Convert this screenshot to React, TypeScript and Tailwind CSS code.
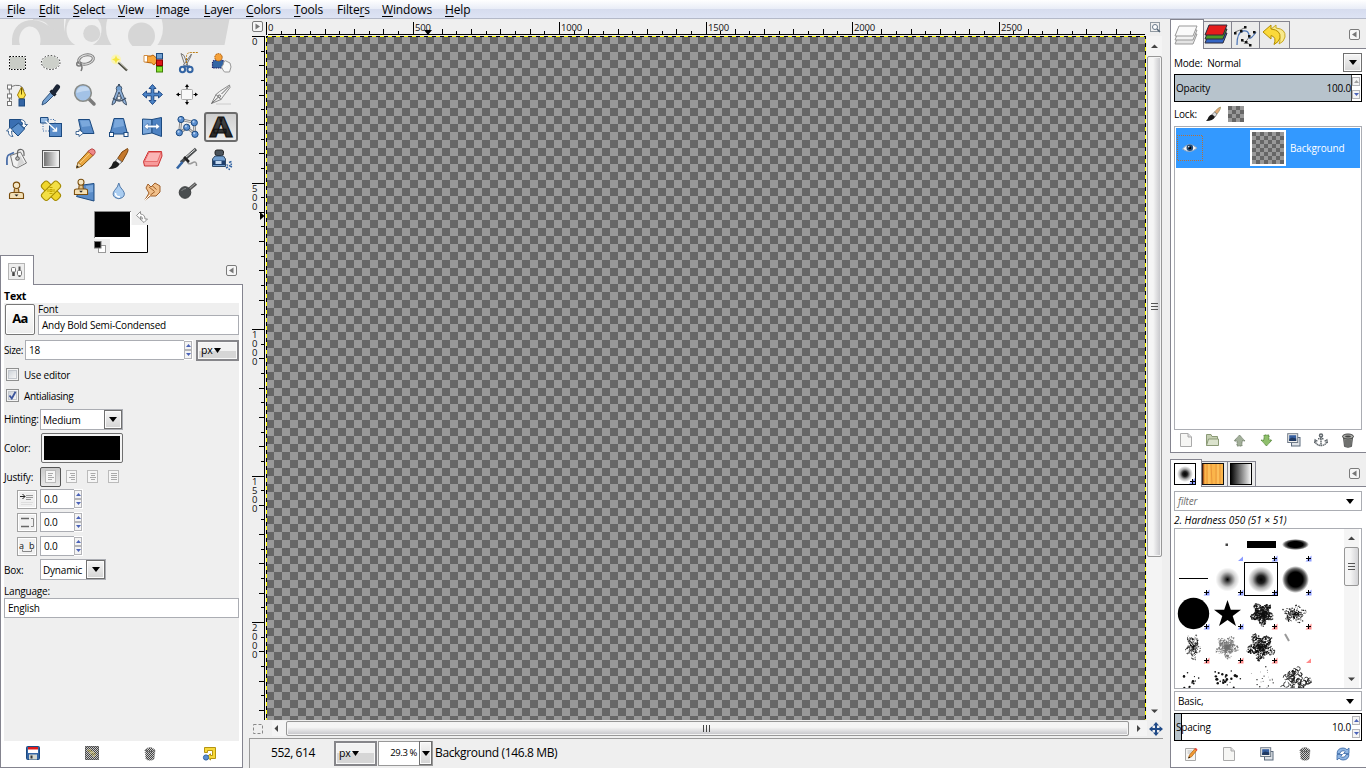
import React from "react";

type Kids = { children?: React.ReactNode };
type TextProps = Kids & { className?: string };

const B = "#3465a4";
const BL = "#729fcf";
const BD = "#1c4a80";

/* ---------- small building blocks ---------- */

function Label({ children, className = "" }: TextProps) {
  return <span className={"whitespace-nowrap text-[10px] leading-[12px] tracking-[-0.2px] text-black " + className}>{children}</span>;
}

function DownTri({ w = 8, h = 5, fill = "#000" }: { w?: number; h?: number; fill?: string }) {
  return (
    <svg width={w} height={h} viewBox="0 0 8 5" preserveAspectRatio="none" className="shrink-0">
      <path d="M0 0H8L4 5Z" fill={fill} />
    </svg>
  );
}

function Stepper({ dim = false }: { dim?: boolean }) {
  return (
    <div className="flex h-full w-[9px] shrink-0 flex-col justify-between bg-white py-px">
      <div className="flex h-[9px] w-[8px] items-center justify-center border border-[#b4b4b8] bg-[#f4f4f4]">
        <svg width="5" height="3" viewBox="0 0 5 3"><path d="M0 3L2.500 0L5 3Z" fill={dim ? "#a0a0a0" : "#4a62b8"} /></svg>
      </div>
      <div className="flex h-[9px] w-[8px] items-center justify-center border border-[#b4b4b8] bg-[#f4f4f4]">
        <svg width="5" height="3" viewBox="0 0 5 3"><path d="M0 0L2.500 3L5 0Z" fill="#4a62b8" /></svg>
      </div>
    </div>
  );
}

function Entry({ children, className = "" }: TextProps) {
  return <div className={"flex shrink-0 items-center border border-[#abadb3] bg-white pl-[3px] " + className}>{children}</div>;
}

function DropButton({ className = "" }: { className?: string }) {
  return (
    <div className={"flex shrink-0 items-center justify-center border border-[#707070] bg-linear-to-b from-[#f6f6f6] to-[#d4d4d4] shadow-[inset_0_0_0_1px_#fbfbfb] " + className}>
      <DownTri />
    </div>
  );
}

function UnitButton({ className = "" }: { className?: string }) {
  return (
    <div className={"flex shrink-0 items-center border-2 border-[#86868a] bg-linear-to-b from-[#f2f2f2] from-50% to-[#d6d6d6] to-50% pl-[3px] shadow-[inset_0_0_0_1px_#f8f8f8] " + className}>
      <Label className="!text-[10.5px]">px</Label>
      <span className="ml-px flex"><DownTri w={7} /></span>
    </div>
  );
}

function CornerArrow({ right = false }: { right?: boolean }) {
  return (
    <svg width="11" height="11" viewBox="0 0 11 11" className="shrink-0">
      <rect x=".5" y=".5" width="10" height="10" rx="1.500" fill="#f6f6f6" stroke="#7b7b7b" />
      <path d={right ? "M3.500 2.500L8 5.500L3.500 8.500Z" : "M7.500 2.500L3 5.500L7.500 8.500Z"} fill="#777" />
    </svg>
  );
}

/* ---------- toolbox icons, each on a 34 x 32 cell ---------- */

const HandlePair = ({ pts }: { pts: number[][] }) => (
  <g>{pts.map(([x, y], i) => <rect key={i} x={x} y={y} width="4" height="4" fill="#fff" stroke={BD} />)}</g>
);

const Stamp = () => (
  <g stroke="#7a4d0c" strokeWidth="1.100">
    <path d="M14.500 13.500L14 18H19L18.500 13.500" fill="#e3c48b" />
    <circle cx="16.500" cy="10.300" r="3.200" fill="#f5e6c4" />
    <path d="M9.500 19.500Q9.500 17.500 12 17.500H21Q23.500 17.500 23.500 19.500V23.500H9.500Z" fill="#f3dfb4" />
    <path d="M14.500 19.500H18.500L16.500 21.500Z" fill="#222" stroke="none" />
  </g>
);

const tools: React.ReactNode[] = [
  <g><rect x="9.500" y="9.500" width="16" height="13" fill="#c9ccc6" stroke="#fff" /><rect x="9.500" y="9.500" width="16" height="13" fill="none" stroke="#000" strokeDasharray="1.500 1.500" /></g>,
  <g><ellipse cx="16.700" cy="15.500" rx="9.300" ry="7" fill="#cdd0ca" stroke="#fff" strokeWidth="1.200" /><ellipse cx="16.700" cy="15.500" rx="9.300" ry="7" fill="none" stroke="#222" strokeDasharray="1.500 1.700" /></g>,
  <g fill="none"><ellipse cx="18" cy="12.500" rx="7.500" ry="4.500" stroke="#777" strokeWidth="3" transform="rotate(-14 18 12.500)" /><ellipse cx="18" cy="12.500" rx="7.500" ry="4.500" stroke="#ddd" strokeWidth="1.200" transform="rotate(-14 18 12.500)" /><path d="M11 15C8 15 8 19 11 19S14 16 11.500 15.500M13 18Q15 20 13 24" stroke="#777" strokeWidth="1.500" /></g>,
  <g><circle cx="14" cy="12.500" r="5" fill="#fdf6a0" opacity=".7" /><path d="M14 8.500L15.200 11.300L18 12.500L15.200 13.700L14 16.500L12.800 13.700L10 12.500L12.800 11.300Z" fill="#f5e63c" /><path d="M16.500 15.500L25 23.500" stroke="#4a4a40" strokeWidth="2.400" /><path d="M17 15L25.200 22.500" stroke="#c9c9b8" strokeWidth="1" /></g>,
  <g><path d="M8.500 9H15L17 8L20.500 11V15L18 18L15.500 16L12 15.500L8.500 14.500Z" fill="#f9a63a" stroke="#b35f0a" /><path d="M8 8.500H11.500V15H8Z" fill="#fff" stroke="#c87920" strokeWidth=".8" /><rect x="20.500" y="6.500" width="6" height="5.500" fill={BL} stroke={BD} /><rect x="20.500" y="13" width="6" height="5.500" fill="#dd1818" stroke="#8a0000" /><rect x="20.500" y="19.500" width="6" height="5.500" fill="#8ae234" stroke="#3d8005" /></g>,
  <g fill="none"><path d="M11 6.500L14 8.500L18 19L15.500 20Z" fill="#eee" stroke="#777" /><path d="M21.500 7L20.500 10L15.500 19.500L13.500 18Z" fill="#ddd" stroke="#777" /><ellipse cx="12.500" cy="22.500" rx="2.600" ry="2.800" stroke={B} strokeWidth="2" /><ellipse cx="20" cy="22.500" rx="2.600" ry="2.800" stroke={B} strokeWidth="2" /><path d="M13 19.500H20" stroke={B} strokeWidth="2" /><path d="M16.500 16V9.500Q16.500 5.500 21 5.500H28" stroke="#bb7c10" strokeDasharray="2 1" /></g>,
  <g><path d="M8.500 21V15.500Q9 13 13 13H16Q20.500 13 20.500 17V21Z" fill={B} stroke="#1b1c66" strokeDasharray="1.500 .8" strokeWidth="1.200" /><circle cx="14.500" cy="10.300" r="3.700" fill="#f5a13a" stroke="#a8580a" strokeDasharray="1.500 .8" /><path d="M19 23L17.500 20L19 18L20 14.500Q21.500 13 23 14.500L26 16L27 20L25.500 25H20.500Z" fill="#f8f8f8" stroke="#999" /></g>,

  <g fill="none"><path d="M9.500 8V24M10 8Q22 3 24 12" stroke="#777" /><path d="M8.500 9L11.500 21" stroke="#999" /><rect x="7.500" y="6" width="4" height="4" fill="#fff" stroke="#777" /><rect x="7.500" y="15" width="4" height="4" fill="#fff" stroke="#777" /><rect x="7.500" y="22.500" width="4" height="4" fill="#fff" stroke="#777" /><path d="M21.500 8L25.500 16L23.500 19.500H19.500L17.500 16Z" fill="#fbe24a" stroke="#a17d00" /><path d="M21.500 9V15.500" stroke="#6b5600" /><rect x="19" y="20" width="5.500" height="7" fill={B} stroke={BD} /></g>,
  <g><path d="M17.500 12.500L20.500 15.500L12 24L8 26L9 22Z" fill={BL} stroke="#31537c" /><path d="M16.500 11.500L21.500 16.500" stroke="#151b25" strokeWidth="3" /><path d="M19.500 13.500L23.500 8" stroke="#1c2636" strokeWidth="5" strokeLinecap="round" /></g>,
  <g><path d="M20.500 19.500L26 25" stroke="#7b7b7b" strokeWidth="3.500" strokeLinecap="round" /><circle cx="15" cy="14" r="8.300" fill="#a3c2e6" stroke="#8a8d8a" strokeWidth="1.600" /><path d="M8.500 14Q8.500 7.500 15 7.500T21.500 11.500Q15 11.500 8.500 14Z" fill="#c3d8f0" /></g>,
  <g fill="none" stroke="#45566b"><circle cx="17" cy="9.500" r="2.800" fill={BL} /><path d="M17 5V7" strokeWidth="2" /><path d="M15 11L10.500 23L10 26L13 24L17 13L21.500 24L24.500 26L24 23L19 11" fill="#8fb1da" /><path d="M11 19Q17 25 24 19" strokeWidth="1.300" /><circle cx="17" cy="19" r="2" fill="#eee" /></g>,
  <path d="M16.500 5.500L20 9.500H17.800V14.200H22.500V12L26.500 15.500L22.500 19V16.800H17.800V21.500H20L16.500 25.500L13 21.500H15.200V16.800H10.500V19L6.500 15.500L10.500 12V14.200H15.200V9.500H13Z" fill="#4b84c8" stroke="#204a87" />,
  <g><rect x="11.500" y="10.500" width="11" height="10" rx="1" fill="#f7f7f7" stroke="#aaa" /><g fill="#000"><path d="M15 8L17 5L19 8ZM16.500 8H17.500V10H16.500ZM15 23L17 26L19 23ZM16.500 21H17.500V23H16.500ZM9 13.500L6 15.500L9 17.500ZM9 15H10.500V16H9ZM25 13.500L28 15.500L25 17.500ZM23.500 15H25V16H23.500Z" /></g></g>,
  <g><path d="M7.500 24.500L12 15.500L15.500 12.500L25.500 6L26 8.500L19.500 17L17 20.500Z" fill="#f0f0f0" stroke="#8a8a8a" /><path d="M7.500 24.500L14.500 18M12 15.500L17 20.500M17.500 15L25 7.500" stroke="#666" fill="none" /><circle cx="15.300" cy="17.200" r="1.200" fill="#fff" stroke="#666" /><path d="M12 25H27" stroke="#ccc" /></g>,

  <g stroke={BD}><path d="M9.500 8.500H21L24.500 17.500H9.500Z" fill="#3a6fb2" /><path d="M18.500 12L24.500 18L18 25L11 18Z" fill="#5c91cd" /><path d="M6.500 20L10 16.500L13.500 20H11.500Q11.500 24 13 25.500Q8 25.500 8.500 20ZM20.500 8.500Q26 9 25 13.500H27.500L24 17L21 13.500H22.500Q23 11 20.500 10.500Z" fill="#fff" strokeWidth=".8" /></g>,
  <g><rect x="15.500" y="12.500" width="12" height="13" fill="#5a8cc8" stroke={BD} /><path d="M6.500 6.500H14V12H6.500Z" fill="#94b9e2" stroke={BD} /><path d="M14 8.500H21V13M9 12.500V20H15" fill="none" stroke={B} strokeDasharray="1 1.500" /><path d="M11.500 10L22 19.500M22.500 16.500V20H18.500" fill="none" stroke="#fff" strokeWidth="1.300" /></g>,
  <g><path d="M10.500 8.500H21.500L26 22.500H13.500Z" fill="#5a8cc8" stroke={BD} /><path d="M12 9.500H21L22.500 15L14 16Z" fill="#7ba8dc" /><path d="M8 20.500H11V18.500L15.500 22L11 25.500V23.500H8Z" fill="#fff" stroke={BD} strokeWidth=".8" /></g>,
  <g><path d="M12 7.500H21.500L25.500 23H8Z" fill="#5a8cc8" stroke={BD} /><path d="M12.800 8.500H21L22 15L11.500 17Z" fill="#7ba8dc" /><HandlePair pts={[[7.5, 21.5], [22, 21.5]]} /></g>,
  <g><path d="M6.500 8L16 8.500V22L6.500 23.500Z" fill="#7ba8dc" stroke={BD} /><path d="M16 8.500L25.500 6.500V25.500L16 22Z" fill="#4d82c2" stroke={BD} /><path d="M8 15.500L12 12V14.200H20V12L24 15.500L20 19V16.800H12V19Z" fill="#fff" stroke={B} strokeWidth=".6" /></g>,
  <g><path d="M11 8.500L24 11.500L25 23L17 16.500L9.500 22Z" fill="none" stroke="#888" strokeWidth="2.800" /><path d="M11 8.500L24 11.500L25 23L17 16.500L9.500 22Z" fill="none" stroke="#ddd" />{[[11, 8.5], [24.3, 11.7], [16.7, 16.3], [9.3, 21.7], [25, 23.3]].map(([x, y], i) => <g key={i}><circle cx={x} cy={y} r="3.100" fill="#5b8fd0" stroke={BD} /><circle cx={x - 0.8} cy={y - 1} r="1.100" fill="#b8d3f2" /></g>)}</g>,
  <text transform="translate(17 25.500) scale(1.220 1)" textAnchor="middle" fontSize="27" fontWeight="900" fontFamily="Roboto, sans-serif" fill="url(#letter)" stroke="#111" strokeWidth="1">A</text>,

  <g><path d="M8.500 12Q6.500 13 7 22M8.500 12L14 9.500" fill="none" stroke="#4a6ea8" strokeWidth="1.800" /><path d="M10.500 12.500L20.500 9L26.500 20L17 25L13 23Z" fill="#f2f2f2" stroke="#777" /><path d="M20 12L24.500 20L17 24Z" fill="#d5d5d5" /><path d="M17.500 16V9Q18 6 21.500 6.500Q24.500 7 24 13" fill="none" stroke="#666" strokeWidth="1.200" /><circle cx="17.500" cy="15.500" r="1.800" fill="#bbb" stroke="#555" /></g>,
  <g><rect x="8.500" y="7.500" width="17" height="17" fill="url(#toolgrad)" stroke="#555" /><rect x="9.500" y="8.500" width="15" height="15" fill="none" stroke="#eee" /></g>,
  <g><path d="M21 7.500L26 11.500L14 23L8.500 25L10 19.500Z" fill="#e9a640" stroke="#86550b" /><path d="M10 19.500L14 23L8.500 25Z" fill="#f3dfb4" stroke="#86550b" strokeWidth=".6" /><path d="M12 20L22 10" stroke="#f8cf80" /><path d="M21.500 7Q24 4.500 26.500 7Q28 9.500 26.500 11L25 12.500L20 8.500Z" fill="#e88" stroke="#a33" strokeWidth=".8" /><path d="M8.500 25L9 22.500L11 24Z" fill="#222" /></g>,
  <g><path d="M25.500 5.500Q27 7 24 12L20 19L15.500 15.500L20 9Z" fill="#c4782c" stroke="#7a4209" /><path d="M15.500 15.500L20 19L17.500 21L13.500 18Z" fill="#eee" stroke="#777" /><path d="M13.500 18L17.500 21Q16 26 6.500 26Q10 23.500 10.500 20.500Q11 18 13.500 18Z" fill="#1c1e1e" /></g>,
  <g><path d="M12.500 8.500H25.500L26 13L22 23H8.500L7.500 18.500Z" fill="#f79a9a" stroke="#cc3333" /><path d="M13 9.300H25L21.500 18.500H8.500Z" fill="#fbb5b5" stroke="#e05555" strokeWidth=".7" /></g>,
  <g><path d="M16.500 14.500Q17 23 22 20T26.500 23" fill="none" stroke="#999" strokeWidth="1.500" /><path d="M11 19.500L26 6" stroke="#4a4d4f" strokeWidth="3.200" /><path d="M15 15L25 6.500" stroke="#e8e8e8" strokeWidth="1" /><path d="M14 14L19 19" stroke="#222" strokeWidth="2.500" /><path d="M12.500 19L7 25.500" stroke={B} strokeWidth="2.600" /></g>,
  <g><rect x="11" y="7" width="8.500" height="5.500" rx="2" fill="#4b545c" stroke="#222" /><path d="M11 13H19.500L21.500 16V23.500H8.500V16Z" fill={BL} stroke="#314a66" /><rect x="9" y="17.500" width="12" height="4.500" fill="#1d3f6d" /><rect x="11.500" y="18" width="6" height="3" fill="#c7dbf1" /><path d="M22.500 21.500L24 22.500M25 19.500L27.500 18.500M22 25L24 24M25 22.500L28 24M26.500 21L28 21.500M24.500 26L26 26.500" stroke={B} strokeWidth="1.400" /></g>,

  <Stamp />,
  <g stroke="#a48a00"><rect x="6" y="11.500" width="22" height="8.500" rx="3" fill="#f0d62c" transform="rotate(45 17 15.700)" /><rect x="6" y="11.500" width="22" height="8.500" rx="3" fill="#f3df45" transform="rotate(-45 17 15.700)" /><path d="M17 12V19M13.500 15.500H20.500" stroke="#c4a600" strokeDasharray="1 1" strokeWidth="3" /></g>,
  <g><path d="M15 10L26 8.500V26L8.500 21.500Z" fill="#5a8cc8" stroke={BD} /><path d="M18 11L25 10V17L18 18Z" fill="#7ba8dc" /><g transform="translate(-2.500 -2.500) scale(.94)"><Stamp /></g></g>,
  <g><path d="M16.800 8Q17.500 12 21 15.500Q24 19.500 20.500 22.500Q17 25 13 22.500Q9.500 19.500 12.500 15.500Q16 12 16.800 8Z" fill="#a9ccf0" stroke="#5078a8" /><path d="M13.500 18Q13.500 22 18 22" stroke="#fff" fill="none" strokeWidth="1.500" /></g>,
  <g><path d="M9 25L13 18L10 13L12 9L15 12L19 8L24 11V17L20 21H14.500Z" fill="#f1c08b" stroke="#a0602a" /><path d="M13 12L18 16M16 10.500L20.500 14.500M14.500 20L19 16.500" stroke="#a0602a" /><path d="M9 25L14 20" stroke="#fff" strokeWidth="1" /></g>,
  <g><path d="M17 16L26 8.500" stroke="#555" strokeWidth="3.500" /><path d="M18 15L25.500 8.500" stroke="#bbb" strokeWidth=".8" /><circle cx="15" cy="17.500" r="5.800" fill="#4a4e50" stroke="#3a3d3e" /><path d="M11.500 16Q13 13.500 16 13.500" stroke="#8a8d8e" fill="none" /></g>,
];

function Toolbox() {
  return (
    <div className="grid w-[238px] grid-cols-7 pt-px">
      {tools.map((t, i) => (
        <div key={i} className="flex h-8 w-[34px] items-center justify-center">
          <div className={i === 20 ? "flex h-[30px] w-[34px] items-center justify-center rounded-[3px] border-2 border-[#6c6c6c] bg-linear-to-b from-[#cfcfcf] to-[#ebebeb]" : "flex"}>
            <svg width="34" height="32" viewBox="0 0 34 32" className="shrink-0">{t}</svg>
          </div>
        </div>
      ))}
    </div>
  );
}

function WilberBanner() {
  return (
    <svg width="243" height="27" viewBox="0 0 243 27" className="block shrink-0">
      <path d="M12 26V20C13 8 21 1 33 1C45 1 52 12 64 13L66 0H229.500L224.500 26H12Z" fill="#d6d6d6" />
      <path d="M20 26C17 18 22 7.500 30 7.500C38 7.500 42 17 40 26Z" fill="#efefef" />
      <path d="M33 0H64V13H60Q50 10 46 4Q42 1 33 1Z" fill="#d6d6d6" />
      <circle cx="84" cy="11" r="17.500" fill="#efefef" />
      <circle cx="91.700" cy="14.500" r="8.500" fill="#d6d6d6" />
      <circle cx="134.500" cy="9" r="28.500" fill="#efefef" />
      <circle cx="141.500" cy="17" r="13.500" fill="#d6d6d6" />
    </svg>
  );
}

function ColorArea() {
  return (
    <div className="flex h-[48px] pl-[94px] pt-[3px]">
      <svg width="56" height="45" viewBox="0 0 56 45">
        <path d="M16 15H54V43H16Z" fill="#fff" />
        <path d="M16 42.500H53.500V15" fill="none" stroke="#000" />
        <path d="M.5 28V1.500H37" fill="none" stroke="#888" />
        <rect x="1" y="2" width="36.500" height="27" fill="#fff" />
        <rect x="1" y="2" width="35" height="25" fill="#000" />
        <rect x="4.500" y="35.500" width="7" height="7" fill="#fff" stroke="#999" />
        <rect x=".5" y="31.500" width="6.500" height="6.500" fill="#000" stroke="#777" />
        <path d="M42.500 5.500L46.500 1.500V4Q51 4.500 51 9H53.500L50 12.500L46 9H48.500Q48.500 6.500 46.500 6.500V9Z" fill="#fff" stroke="#888" strokeWidth=".9" />
      </svg>
    </div>
  );
}

function CheckBox({ on = false }: { on?: boolean }) {
  return (
    <div className="ml-[2px] flex size-[13px] shrink-0 items-center justify-center border border-[#8e8f8f] bg-[#f4f4f4]">
      <div className="flex size-[9px] items-center justify-center border border-[#c3c7cd] bg-linear-to-br from-[#cfd4da] to-[#f6f6f6]">
        {on && <svg width="9" height="9" viewBox="0 0 9 9" className="shrink-0"><path d="M1.500 4.500L3.800 7.500L7.500 .8" stroke="#3c559c" strokeWidth="1.800" fill="none" /></svg>}
      </div>
    </div>
  );
}

function JustifyIcon({ kind }: { kind: number }) {
  const rows = [[[3, 5], [3, 4], [3, 6], [3, 4]], [[4, 5], [5, 4], [3, 6], [5, 4]], [[3.5, 5], [4, 4], [3, 6], [4, 4]], [[3, 6], [3, 6], [3, 6], [3, 6]]][kind];
  return (
    <svg width="12" height="14" viewBox="0 0 12 14" className="shrink-0">
      <rect x=".5" y=".5" width="10" height="12" fill="#f6f6f6" stroke="#bbb" />
      {rows.map(([x, w], i) => <rect key={i} x={x} y={3 + i * 2} width={w} height="1" fill="#aaa" />)}
    </svg>
  );
}

function SpinRow({ icon, h }: { icon: React.ReactNode; h: string }) {
  return (
    <div className={"flex items-center " + h}>
      <div className="ml-[13px] flex h-[19px] w-5 shrink-0 items-center justify-center border border-[#a2a2a2] bg-[#f0f0f0] shadow-[inset_0_0_0_1px_#fff]">{icon}</div>
      <Entry className="ml-[3px] h-5 w-[34px] border-r-0"><Label>0.0</Label></Entry>
      <div className="h-5"><Stepper /></div>
    </div>
  );
}

const Floppy = () => (
  <svg width="14" height="14" viewBox="0 0 14 14"><rect x=".5" y=".5" width="13" height="13" rx="1" fill={B} stroke={BD} /><rect x="2" y="1" width="10" height="6" fill="#fff" /><rect x="2" y="1" width="10" height="2.500" fill="#e01b1b" /><rect x="3" y="8.500" width="8" height="5" fill="#d3d7cf" /><rect x="4.500" y="9.500" width="2" height="3" fill="#333" /></svg>
);
const Trash = () => (
  <svg width="14" height="15" viewBox="0 0 14 15"><path d="M2.500 4.500L3.500 13.500Q7 15 10.500 13.500L11.500 4.500Z" fill="#8b8e89" stroke="#555" /><ellipse cx="7" cy="3.500" rx="5.500" ry="2.500" fill="#a9aba7" stroke="#444" /><ellipse cx="7" cy="3.500" rx="3" ry="1" fill="#444" /><path d="M5 7V13M7 7V13.500M9 7V13" stroke="#555" /></svg>
);
const DimTrash = () => (
  <svg width="14" height="15" viewBox="0 0 14 15"><path d="M2 4L3 13Q7 15.500 11 13L12 4Q7 -1 2 4Z" fill="url(#stip)" stroke="#777" strokeDasharray="1 1" /><path d="M2 4Q7 7.500 12 4" stroke="#666" fill="none" /></svg>
);
const StippleBlock = () => (
  <svg width="14" height="14" viewBox="0 0 14 14"><rect width="14" height="14" rx="1" fill="url(#stip)" /><rect x=".5" y=".5" width="13" height="13" fill="none" stroke="#555" strokeDasharray="1 1" /><path d="M3 4L10 11M5 4L11 9" stroke="#c8bb6a" strokeDasharray="1 1" strokeWidth="2" /></svg>
);
const Revert = () => (
  <svg width="15" height="15" viewBox="0 0 15 15"><path d="M2.500 1.500H13.500V12.500H8.500V14L5 10.800L8.500 7.800V9.500H10.500V4.500H5.500V6.500H2.500Z" fill="#f7d93b" stroke="#ad8a00" strokeWidth=".9" /><circle cx="4" cy="11.500" r="2.600" fill="#5b8fd0" stroke={B} /></svg>
);
const NewPage = () => (
  <svg width="14" height="14" viewBox="0 0 14 14"><path d="M1.500 .5H9L12.500 4V13.500H1.500Z" fill="#f6f6f4" stroke="#aaa" /><path d="M9 .5V4H12.500" fill="#ddd" stroke="#aaa" /></svg>
);
const Folder = () => (
  <svg width="15" height="14" viewBox="0 0 15 14"><path d="M1.500 12.500V1.500H6L7 3.500H12.500V6" fill="#c5cfb2" stroke="#8b9a77" /><path d="M1.500 12.500L3.500 6H13.500V12.500Z" fill="#dbe3cd" stroke="#8b9a77" /></svg>
);
const ArrowUp = ({ down = false }: { down?: boolean }) => (
  <svg width="13" height="13" viewBox="0 0 13 13" className={down ? "rotate-180" : ""}><path d="M6.500 1L12 7H9V12H4V7H1Z" fill={down ? "#8fbf6c" : "#a3b09a"} stroke={down ? "#4f7f35" : "#6d7a66"} strokeDasharray="1 .7" /></svg>
);
const Duplicate = () => (
  <svg width="14" height="14" viewBox="0 0 14 14"><rect x="4.500" y="4.500" width="8.500" height="8.500" fill="#dfe3e8" stroke="#5b6a7d" /><rect x=".7" y=".7" width="10" height="8.800" fill="#f1f1ee" stroke="#707b88" /><rect x="2.200" y="2.200" width="7" height="5.800" fill="#365fa0" /><path d="M2.200 6L5 4.500L9.200 5.500V8H2.200Z" fill="#203a63" /></svg>
);
const Anchor = () => (
  <svg width="14" height="14" viewBox="0 0 14 14" fill="none" stroke="#62696e" strokeWidth="1.500"><circle cx="7" cy="2.500" r="1.500" /><path d="M7 4V12.500M4 5.800H10M1 7.500Q2 12.500 7 12.500T13 7.500M.5 10L1.200 7L3.800 8.500M13.500 10L12.800 7L10.200 8.500" strokeDasharray="1.500 .5" /></svg>
);
const EditPage = () => (
  <svg width="14" height="14" viewBox="0 0 14 14"><path d="M1.500 1.500H11.500V13.500H1.500Z" fill="#f6f6f4" stroke="#aaa" /><path d="M3.500 4H8M3.500 6H7" stroke="#bbb" /><path d="M4.500 11L5.500 8L11 1.500L13 3L7.500 9.800Z" fill="#f29a35" stroke="#a85b08" strokeWidth=".7" /><path d="M10.500 2L12.500 4L13.500 2.500L12 1Z" fill="#e44" /><path d="M4.200 11.500L5 9.500L6.200 10.400Z" fill="#111" /></svg>
);
const Refresh = () => (
  <svg width="14" height="14" viewBox="0 0 14 14"><path d="M1 6.500Q1.500 1 7 1Q9.500 1 11 2.800L13 1V6.500H7.500L9.300 4.700Q8.500 3.700 7 3.700Q4 4 4 6.500Z" fill="#8fb5e2" stroke={B} strokeWidth=".8" /><path d="M13 7.500Q12.500 13 7 13Q4.500 13 3 11.200L1 13V7.500H6.500L4.700 9.300Q5.500 10.300 7 10.300Q10 10 10 7.500Z" fill="#8fb5e2" stroke={B} strokeWidth=".8" /></svg>
);

/* ---------- left dock ---------- */

function LeftDock() {
  return (
    <div className="flex w-[243px] shrink-0 flex-col">
      <WilberBanner />
      <Toolbox />
      <ColorArea />
      <div className="flex h-[30px] items-start">
        <div className="z-10 flex h-[30px] w-[34px] items-center justify-center border border-b-0 border-[#84848f] bg-white pr-px pt-[2px]">
          <svg width="18" height="18" viewBox="0 0 18 18"><rect x=".5" y=".5" width="16" height="16" fill="#eee" stroke="#b5b5b5" /><path d="M5.500 8V13" stroke="#444" strokeWidth="2.500" /><rect x="3.500" y="4.500" width="4" height="4.500" rx="1" fill="#fff" stroke="#777" /><path d="M11.500 3.500V14" stroke="#555" strokeWidth="2" /><rect x="9.500" y="7.500" width="4" height="5" rx="1" fill="#fff" stroke="#777" /></svg>
        </div>
        <div className="flex grow justify-end pr-[6px] pt-[10px]"><CornerArrow /></div>
      </div>
      <div className="-mt-px flex h-[484px] w-[243px] flex-col border border-[#84848f] bg-white pl-[3px] pr-[3px]">
        <div className="flex h-[18px] items-center pt-[3px]"><span className="text-[10.5px] font-bold leading-[12px] tracking-[-0.2px]">Text</span></div>
        <div className="flex h-[438px] w-[235px] flex-col bg-[#efefef]">
          <div className="flex h-[35px]">
            <div className="ml-px mt-px flex h-[31px] w-[30px] shrink-0 items-center justify-center rounded-[2px] border border-[#777] bg-linear-to-b from-[#fff] to-[#ececec] shadow-[inset_0_0_0_1px_#fff]">
              <span className="-mt-[2px] text-[13px] font-bold leading-none tracking-[-0.6px]">Aa</span>
            </div>
            <div className="ml-[3px] flex flex-col">
              <Label>Font</Label>
              <Entry className="h-5 w-[201px]"><Label>Andy Bold Semi-Condensed</Label></Entry>
            </div>
          </div>
          <div className="flex h-6 items-center">
            <Label className="w-[21px] tracking-[-0.4px]">Size:</Label>
            <Entry className="h-5 w-[159px] border-r-0 !pl-[3px]"><Label>18</Label></Entry>
            <div className="h-5"><Stepper /></div>
            <UnitButton className="ml-[3px] h-[21px] w-[43px]" />
          </div>
          <div className="flex h-[25px] items-center"><CheckBox /><Label className="ml-[5px]">Use editor</Label></div>
          <div className="flex h-[17px] items-center"><CheckBox on /><Label className="ml-[5px] tracking-[-0.35px]">Antialiasing</Label></div>
          <div className="flex h-[29px] items-start pt-[5px]">
            <Label className="w-9 pt-[4px]">Hinting:</Label>
            <Entry className="h-[21px] w-[83px] justify-between !pl-[2px]"><Label>Medium</Label><DropButton className="h-[19px] w-[18px]" /></Entry>
          </div>
          <div className="flex h-[30px] items-center">
            <Label className="w-[37px]">Color:</Label>
            <div className="h-[30px] w-[82px] rounded-[2px] border border-[#707070] bg-[#f4f4f4] p-[2px]"><div className="h-full w-full bg-black" /></div>
          </div>
          <div className="flex h-[25px] items-center pt-[2px]">
            <Label className="w-9">Justify:</Label>
            <div className="flex h-5 w-[21px] items-center justify-center rounded-[2px] border border-[#555] bg-linear-to-b from-[#c8c8c8] to-[#e8e8e8]"><JustifyIcon kind={0} /></div>
            <div className="ml-[5px] flex gap-[9px]"><JustifyIcon kind={1} /><JustifyIcon kind={2} /><JustifyIcon kind={3} /></div>
          </div>
          <SpinRow h="h-[22px]" icon={<svg width="16" height="15" viewBox="0 0 16 15" className="shrink-0"><path d="M1 4.500H6M3.500 2L6 4.500L3.500 7" stroke="#222" fill="none" /><path d="M7 3.500H14M7 5.500H14M7 7.500H12" stroke="#999" /><path d="M2 10.500H14M2 12.500H13" stroke="#ddd" /></svg>} />
          <SpinRow h="h-[24px]" icon={<svg width="16" height="15" viewBox="0 0 16 15" className="shrink-0"><path d="M2 3.500H10M2 11.500H10" stroke="#666" strokeWidth="1.600" /><path d="M12 3.500H14.500V11.500H12" stroke="#888" fill="none" /></svg>} />
          <SpinRow h="h-[24px]" icon={<svg width="18" height="17" viewBox="0 0 18 17" className="shrink-0"><text x="1" y="11" fontSize="9" fill="#111">a</text><text x="11" y="11" fontSize="9" fill="#111">b</text><path d="M4.500 11.500V13.500H13.500V11.500" stroke="#888" fill="none" /></svg>} />
          <div className="flex h-[23px] items-center">
            <Label className="w-9">Box:</Label>
            <Entry className="h-[21px] w-[66px] justify-between !pl-[2px]"><Label>Dynamic</Label><DropButton className="h-[19px] w-[19px]" /></Entry>
          </div>
          <div className="flex h-[17px] items-center pt-[2px]"><Label>Language:</Label></div>
          <Entry className="h-5 w-[235px]"><Label>English</Label></Entry>
        </div>
        <div className="flex h-[25px] w-[235px] items-center justify-around pb-px">
          <Floppy /><StippleBlock /><DimTrash /><Revert />
        </div>
      </div>
    </div>
  );
}

/* ---------- rulers and canvas ---------- */

const STEP = 14.65;

function HRuler() {
  return (
    <svg width="896" height="17" viewBox="0 0 896 17" className="block shrink-0">
      <g shapeRendering="crispEdges" fill="#000">
        <rect x="2" y="15" width="877" height="1" />
        {Array.from({ length: 60 }, (_, i) => {
          const x = Math.round(i * STEP);
          const top = i % 10 === 0 ? 3 : i % 2 === 0 ? 10 : 12;
          return <rect key={i} x={x} y={top} width="1" height={16 - top} />;
        })}
      </g>
      {[0, 1, 2, 3, 4, 5].map((k) => (
        <text key={k} x={Math.round(k * 146.5) + 2} y="12" fontSize="9.500" letterSpacing="-.2" fill="#111">{k * 500}</text>
      ))}
      <path d="M158 11H166L162 16Z" fill="#000" />
    </svg>
  );
}

function VRuler() {
  return (
    <svg width="14" height="684" viewBox="0 0 14 684" className="block shrink-0">
      <g shapeRendering="crispEdges" fill="#000">
        <rect x="12" y="1" width="1" height="683" />
        {Array.from({ length: 47 }, (_, i) => {
          const y = Math.round(i * STEP);
          const left = i % 10 === 0 ? 0 : i % 2 === 0 ? 7 : 9;
          return <rect key={i} x={left} y={y} width={13 - left} height="1" />;
        })}
      </g>
      {[0, 500, 1000, 1500, 2000].map((v) =>
        String(v).split("").map((d, j) => (
          <text key={v + "-" + j} x="0" y={Math.round((v / 50) * STEP) + 9 + j * 9} fontSize="9.500" fill="#111">{d}</text>
        ))
      )}
      <path d="M8 176V184L12.500 180Z" fill="#000" />
    </svg>
  );
}

function Canvas() {
  return (
    <svg width="880" height="684" viewBox="0 0 880 684" className="block shrink-0">
      <defs>
        <pattern id="chk" width="16" height="16" patternUnits="userSpaceOnUse">
          <rect width="16" height="16" fill="#999" /><rect width="8" height="8" fill="#666" /><rect x="8" y="8" width="8" height="8" fill="#666" />
        </pattern>
      </defs>
      <rect width="880" height="684" fill="url(#chk)" shapeRendering="crispEdges" />
      <g fill="none" shapeRendering="crispEdges">
        <path d="M0 .5H879.500V684M.5 0V684" stroke="#ff0" />
        <path d="M0 .5H879.500V684M.5 0V684" stroke="#000" strokeDasharray="4 4" strokeDashoffset="2" />
      </g>
    </svg>
  );
}

const Tri = ({ d }: { d: string }) => <svg width="7" height="7" viewBox="0 0 7 7" className="shrink-0"><path d={d} fill="#444" /></svg>;

function CenterView() {
  return (
    <div className="flex w-[920px] shrink-0 flex-col">
      <div className="flex h-[17px] pl-[9px]">
        <div className="flex w-[14px] items-start pt-[2px]"><CornerArrow right /></div>
        <HRuler />
      </div>
      <div className="flex h-[684px] pl-[9px]">
        <VRuler />
        <Canvas />
        <div className="flex w-px shrink-0" />
        <div className="-mt-[14px] flex h-[698px] w-[15px] flex-col items-center">
          <svg width="11" height="11" viewBox="0 0 11 11" className="ml-px shrink-0"><rect x=".5" y=".5" width="9" height="9" fill="none" stroke="#345" strokeDasharray="1 1" /><circle cx="5" cy="5" r="2.500" fill="#fff" stroke="#678" /><path d="M7 7L10 10" stroke="#567" strokeWidth="1.500" /></svg>
          <div className="mt-[3px] flex h-[20px] w-full shrink-0 items-center justify-center bg-[#f4f4f4]"><Tri d="M0 5H7L3.500 1.500Z" /></div>
          <div className="flex h-[501px] w-[15px] shrink-0 items-center justify-center rounded-[2px] border border-[#979797] bg-linear-to-r from-[#f5f5f5] from-40% to-[#c3c3c7] shadow-[inset_0_0_0_1px_#f4f4f4]">
            <div className="flex w-[7px] flex-col gap-[2px]"><i className="h-px bg-[#555]" /><i className="h-px bg-[#555]" /><i className="h-px bg-[#555]" /></div>
          </div>
          <div className="flex w-full grow items-end justify-center bg-[#f4f4f4] pb-[5px]"><Tri d="M0 1.500H7L3.500 5Z" /></div>
        </div>
      </div>
      <div className="flex h-[18px] items-center pb-px">
        <div className="flex w-[29px] shrink-0 justify-center pl-px"><svg width="10" height="10" viewBox="0 0 10 10"><rect x=".5" y=".5" width="9" height="9" fill="none" stroke="#888" strokeDasharray="3 2" /></svg></div>
        <div className="flex h-[15px] w-[14px] shrink-0 items-center bg-[#f4f4f4] pl-px"><Tri d="M5 0V7L1.500 3.500Z" /></div>
        <div className="flex h-[15px] w-[843px] shrink-0 items-center justify-center rounded-[2px] border border-[#979797] bg-linear-to-b from-[#f5f5f5] from-40% to-[#c3c3c7] pr-[2px] shadow-[inset_0_0_0_1px_#f4f4f4]">
          <div className="flex h-[7px] gap-[2px]"><i className="w-px bg-[#444]" /><i className="w-px bg-[#444]" /><i className="w-px bg-[#444]" /></div>
        </div>
        <div className="flex h-[15px] w-[18px] shrink-0 items-center justify-center bg-[#f4f4f4]"><Tri d="M2 0V7L5.500 3.500Z" /></div>
        <svg width="14" height="14" viewBox="0 0 14 14" className="ml-[2px] shrink-0"><path d="M7 1V13M1 7H13" stroke="#204a87" strokeWidth="2" /><path d="M4 3.500L7 0L10 3.500ZM4 10.500L7 14L10 10.500ZM3.500 4L0 7L3.500 10ZM10.500 4L14 7L10.500 10Z" fill="#204a87" /></svg>
      </div>
      <div className="ml-[6px] flex h-[30px] items-center border-l border-t border-[#9a9a9a] pb-px pl-[20px]">
        <span className="w-[64px] shrink-0 whitespace-nowrap pl-px text-[12px] tracking-[-0.45px]">552, 614</span>
        <UnitButton className="h-[25px] w-[43px]" />
        <div className="ml-px flex h-[25px] w-[55px] shrink-0 items-center justify-end border border-[#999] bg-white">
          <Label className="mr-[2px] !text-[9.500px] tracking-[-0.4px]">29.3 %</Label>
          <DropButton className="h-[24px] w-[13px]" />
        </div>
        <span className="ml-[2px] whitespace-nowrap text-[12px] tracking-[-0.35px]">Background (146.8 MB)</span>
      </div>
    </div>
  );
}

/* ---------- right dock ---------- */

const Check = ({ id, s, w }: { id: string; s: number; w: number }) => (
  <svg width={w} height={w} shapeRendering="crispEdges" className="shrink-0">
    <defs><pattern id={id} width={s * 2} height={s * 2} patternUnits="userSpaceOnUse"><rect width={s * 2} height={s * 2} fill="#999" /><rect width={s} height={s} fill="#666" /><rect x={s} y={s} width={s} height={s} fill="#666" /></pattern></defs>
    <rect width={w} height={w} fill={`url(#${id})`} />
  </svg>
);

function LayersIcon({ colors, stroke }: { colors: string[]; stroke: string }) {
  return (
    <svg width="24" height="22" viewBox="0 0 24 22" className="shrink-0">
      {[2, 1, 0].map((i) => <path key={i} d={`M5 ${1 + i * 4}H23L19 ${11 + i * 4}H1Z`} fill={colors[i]} stroke={stroke} />)}
    </svg>
  );
}

const frameDots = Array.from({ length: 13 }, (_, i) => i * 2);

function VisibleEye() {
  return (
    <svg width="26" height="26" viewBox="0 0 26 26" className="shrink-0">
      <g fill="#b3713a" shapeRendering="crispEdges">
        {frameDots.map((k) => (
          <g key={k}>
            <rect x={k} y="0" width="1" height="1" /><rect x={k + 1} y="25" width="1" height="1" />
            <rect x="0" y={k} width="1" height="1" /><rect x="25" y={k + 1} width="1" height="1" />
          </g>
        ))}
      </g>
      <g transform="translate(5 7)">
        <path d="M.5 7Q7 -1.500 15 6Q8 12.500 .5 7Z" fill="#f4f4f4" stroke="#8ba6c4" />
        <circle cx="7.800" cy="5.800" r="3.300" fill="#204a77" /><circle cx="7.800" cy="5.800" r="1.500" fill="#000" /><circle cx="6.800" cy="4.800" r=".8" fill="#fff" />
      </g>
    </svg>
  );
}

function LayersDock() {
  return (
    <div className="flex h-[434px] w-[196px] flex-col">
      <div className="flex h-[30px] items-end">
        <div className="z-10 flex h-[30px] w-[34px] items-center border border-b-0 border-[#84848f] bg-white pl-[3px] pt-[2px]"><LayersIcon colors={["#fafafa", "#f2f2f2", "#e4e4e4"]} stroke="#999" /></div>
        <div className="flex h-[28px] w-[28px] items-center border border-l-0 border-[#84848f] bg-[#ebebeb]"><LayersIcon colors={["#e51c1c", "#4e9a26", "#3465c4"]} stroke="#2a2a3a" /></div>
        <div className="flex h-[28px] w-[28px] items-center border border-l-0 border-[#84848f] bg-[#ebebeb] pl-px">
          <svg width="24" height="23" viewBox="0 0 24 23" fill="none" className="shrink-0"><path d="M4 21Q4 8 10 7T16 12T23 8" stroke="#5078b8" strokeWidth="1.300" /><path d="M8 16L18 21M13 3Q8 6 2 8M17 12L11 20" stroke="#777" /><g fill="#111"><rect x="1" y="8" width="2.500" height="2.500" /><rect x="11" y="2" width="2.500" height="2.500" /><rect x="7" y="6" width="2.500" height="2.500" /><rect x="15" y="11" width="2.500" height="2.500" /><rect x="20" y="7" width="2.500" height="2.500" /><rect x="12" y="17" width="2.500" height="2.500" /><rect x="16" y="20" width="2.500" height="2.500" /><rect x="8" y="15" width="2.500" height="2.500" /></g></svg>
        </div>
        <div className="flex h-[28px] w-[30px] items-center border border-l-0 border-[#84848f] bg-[#ebebeb] pl-[2px]">
          <svg width="25" height="22" viewBox="0 0 25 22" className="shrink-0"><path d="M8 6L14 1V4Q24 5 23 13Q22 18 17 20Q20 13 14 11V14Z" fill="#f8e98b" stroke="#c8a820" /><path d="M1 8L9 1V5Q19 6 18 14Q17 18 12 20.500Q15 13 9 11.500V15Z" fill="#fbd93a" stroke="#b38d00" /></svg>
        </div>
        <div className="flex h-full grow justify-end pr-[6px] pt-[10px]"><CornerArrow /></div>
      </div>
      <div className="-mt-px flex h-[405px] w-[197px] flex-col border border-[#84848f] bg-white pl-[3px]">
        <div className="flex h-[25px] items-center justify-between pr-[4px] pt-[2px]">
          <Label className="tracking-[-0.2px]">Mode:&nbsp; Normal</Label>
          <DropButton className="h-[19px] w-[19px]" />
        </div>
        <div className="flex h-[28px] w-[188px] items-center border border-black bg-white">
          <div className="flex h-full w-[177px] shrink-0 items-center justify-between border-r border-[#444] bg-[#b7c3cc] pl-px"><Label className="tracking-[-0.1px]">Opacity</Label><Label>100.0</Label></div>
          <div className="h-[24px]"><Stepper dim /></div>
        </div>
        <div className="flex h-[24px] items-center">
          <Label className="w-[31px]">Lock:</Label>
          <svg width="17" height="16" viewBox="0 0 17 16" className="shrink-0"><path d="M15.500 1Q16 3 12 8L9.500 6Q13 1.500 15.500 1Z" fill="#e0a878" stroke="#885" strokeWidth=".6" /><path d="M9.500 6L12 8L10 11L7 8.500Z" fill="#ddd" stroke="#666" strokeWidth=".7" /><path d="M7 8.500L10 11Q8 15 1 15Q3 13 3.500 11Q5 8.500 7 8.500Z" fill="#1a1a1a" /></svg>
          <span className="ml-[6px] flex"><Check id="ck1" s={4} w={16} /></span>
        </div>
        <div className="h-[304px] w-[188px] border border-[#abadb3] bg-white p-px">
          <div className="flex h-10 w-[184px] items-center bg-[#3399ff] pl-px">
            <VisibleEye />
            <div className="ml-[47px] flex size-9 shrink-0 items-center justify-center border-2 border-white"><Check id="ck2" s={4} w={32} /></div>
            <Label className="ml-[4px] !text-white tracking-[-0.15px]">Background</Label>
          </div>
        </div>
        <div className="-ml-[2px] flex h-[20px] w-[189px] items-center [&>*]:flex [&>*]:w-[27px] [&>*]:justify-center">
          <div><NewPage /></div><div><Folder /></div><div><ArrowUp /></div><div><ArrowUp down /></div><div><Duplicate /></div><div><Anchor /></div><div><Trash /></div>
        </div>
      </div>
    </div>
  );
}

function splat(seed: number, n: number, r: number, size: number, sy: number, pow: number) {
  let s = seed;
  const rnd = () => { s = (s * 16807) % 2147483647; return s / 2147483647; };
  for (let i = 0; i < 5; i++) rnd();
  return Array.from({ length: n }, () => {
    const a = rnd() * 6.2832;
    const d = Math.pow(rnd(), pow) * r * (0.8 + 0.2 * Math.sin(a * 5 + seed));
    return { x: 17 + Math.cos(a) * d, y: 17 + Math.sin(a) * d * sy, r: size * (0.4 + rnd() * 0.8) };
  });
}
const Splat = ({ seed, n, r, size, sy = 1, pow = 0.75 }: { seed: number; n: number; r: number; size: number; sy?: number; pow?: number }) => (
  <g fill="#111">{splat(seed, n, r, size, sy, pow).map((p, i) => <circle key={i} cx={p.x} cy={p.y} r={p.r} />)}</g>
);

const Swirls = () => (
  <g fill="none" stroke="#111" strokeWidth=".8">{splat(77, 46, 15, 1, 1, 0.6).map((p, i) => <circle key={i} cx={p.x} cy={p.y} r={p.r * 2.6} strokeDasharray="5 2" />)}</g>
);

type Brush = { art: React.ReactNode; mark?: "b" | "r" | "tb" | "tr" };
const brushes: Brush[] = [
  { art: null },
  { art: <rect x="15.500" y="15.500" width="2.500" height="2.500" fill="#444" />, mark: "tb" },
  { art: <rect x="3" y="13" width="29" height="7" fill="#000" />, mark: "b" },
  { art: <ellipse cx="17.500" cy="16.500" rx="13.500" ry="5.500" fill="url(#soft2)" />, mark: "b" },
  { art: <rect x="3" y="16" width="29" height="1" fill="#000" />, mark: "b" },
  { art: <circle cx="17.500" cy="17.500" r="12" fill="url(#soft0)" />, mark: "b" },
  { art: <circle cx="17" cy="17.500" r="13" fill="url(#soft1)" />, mark: "b" },
  { art: <circle cx="17.500" cy="17.500" r="13.500" fill="url(#soft2)" />, mark: "b" },
  { art: <circle cx="17.500" cy="17.500" r="15.700" fill="#000" />, mark: "b" },
  { art: <path d="M17.500 4L20.800 13.800H31L22.700 20L26 30L17.500 24L9 30L12.300 20L4 13.800H14.200Z" fill="#000" />, mark: "b" },
  { art: <g transform="translate(1.500 1)"><Splat seed={1131} n={850} r={12.5} size={0.6} pow={0.8} /></g>, mark: "r" },
  { art: <g transform="translate(0 1)"><Splat seed={9377} n={260} r={13.5} size={0.6} sy={0.75} pow={0.9} /></g>, mark: "r" },
  { art: <g transform="translate(7 0) scale(.6 1)"><Splat seed={4141} n={330} r={14.5} size={0.65} pow={0.9} /></g>, mark: "r" },
  { art: <g opacity=".6"><Splat seed={5222} n={800} r={12.5} size={0.5} pow={1} /></g>, mark: "r" },
  { art: <Splat seed={6421} n={560} r={15} size={0.7} pow={0.75} />, mark: "r" },
  { art: <path d="M7 4L11 11" stroke="#999" strokeWidth="2" />, mark: "tr" },
  { art: <Splat seed={1979} n={12} r={16} size={1.1} /> },
  { art: <Splat seed={2823} n={26} r={16} size={1.3} /> },
  { art: <Splat seed={3765} n={22} r={16} size={0.6} pow={0.5} /> },
  { art: <Swirls /> },
];

function Mark({ kind }: { kind: Brush["mark"] }) {
  if (!kind) return null;
  const c = kind.endsWith("b") ? "#8b9cff" : "#ff8a8a";
  return (
    <g>
      <path d={kind.length === 1 ? "M33.500 27.500V33.500H27.500Z" : "M33 28.500V33H28Z"} fill={c} />
      {kind.length === 1 && <path d="M30.500 28V33M28 30.500H33" stroke="#000" />}
    </g>
  );
}

function BrushesDock() {
  return (
    <div className="mt-[6px] flex h-[309px] w-[196px] flex-col">
      <div className="flex h-[28px] items-end">
        <div className="z-10 flex h-[28px] w-[32px] items-center border border-b-0 border-[#84848f] bg-white pl-[3px]">
          <svg width="22" height="22" viewBox="0 0 22 22" className="shrink-0"><rect x=".5" y=".5" width="21" height="21" fill="#fff" stroke="#000" /><circle cx="11" cy="11" r="8" fill="url(#soft1)" /><path d="M21 15V21H15Z" fill="#8b9cff" /><path d="M18.500 16V21M16 18.500H21" stroke="#000" /></svg>
        </div>
        <div className="flex h-[26px] w-[26px] items-center border border-l-0 border-[#84848f] bg-[#ebebeb]">
          <svg width="22" height="22" viewBox="0 0 22 22" className="shrink-0"><rect x=".5" y=".5" width="21" height="21" fill="#fbb54a" stroke="#111" /><path d="M1.500 1V21" stroke="#b05a20" strokeWidth="1.500" /><path d="M5 1V21M9 1L10 21M14 1V21M18 1V21" stroke="#e9963a" /><path d="M7 1V21M16 1V21" stroke="#fdc96a" /></svg>
        </div>
        <div className="flex h-[26px] w-[28px] items-center border border-l-0 border-[#84848f] bg-[#ebebeb] pl-[2px]">
          <svg width="22" height="22" viewBox="0 0 22 22" className="shrink-0"><rect x=".5" y=".5" width="21" height="21" fill="url(#bw)" stroke="#000" /></svg>
        </div>
        <div className="flex h-full grow justify-end pr-[6px] pt-[9px]"><CornerArrow /></div>
      </div>
      <div className="-mt-px flex h-[282px] w-[197px] flex-col border border-[#84848f] bg-white pl-[3px] pt-[4px]">
        <Entry className="h-5 w-[188px] justify-between pr-[7px]"><Label className="italic !text-[#707070]">filter</Label><DownTri /></Entry>
        <div className="flex h-[17px] items-center"><Label className="italic tracking-[0px]">2. Hardness 050 (51 × 51)</Label></div>
        <div className="flex h-[161px] w-[188px] overflow-hidden border border-[#abadb3] bg-white pl-px">
          <div className="-mt-px grid h-[170px] w-[136px] shrink-0 grid-cols-4">
            {brushes.map((b, i) => (
              <svg key={i} width="34" height="34" viewBox="0 0 34 34" className="block">
                {b.art}
                <Mark kind={b.mark} />
                {i === 6 && <rect x=".5" y=".5" width="33" height="33" fill="none" stroke="#000" />}
              </svg>
            ))}
          </div>
          <div className="ml-[32px] flex h-full w-[15px] shrink-0 flex-col items-center bg-[#f5f5f5]">
            <div className="flex h-[18px] shrink-0 items-center"><Tri d="M0 5H7L3.500 1.500Z" /></div>
            <div className="flex h-[39px] w-[15px] shrink-0 items-center justify-center rounded-[2px] border border-[#979797] bg-linear-to-r from-[#f5f5f5] from-40% to-[#d3d3d6]">
              <div className="flex w-[7px] flex-col gap-[2px]"><i className="h-px bg-[#555]" /><i className="h-px bg-[#555]" /><i className="h-px bg-[#555]" /></div>
            </div>
            <div className="mt-auto flex h-[18px] items-center"><Tri d="M0 1.500H7L3.500 5Z" /></div>
          </div>
        </div>
        <Entry className="mt-[2px] h-5 w-[188px] justify-between pr-[7px]"><Label>Basic,</Label><DownTri /></Entry>
        <div className="mt-[2px] flex h-[28px] w-[188px] shrink-0 items-center border border-black bg-white">
          <div className="h-full w-[7px] shrink-0 border-r border-black bg-[#b7c3cc]" />
          <div className="-ml-[6px] flex grow items-center justify-between pr-px"><Label className="tracking-[-0.1px]">Spacing</Label><Label>10.0</Label></div>
          <div className="h-[24px]"><Stepper /></div>
        </div>
        <div className="-ml-[2px] flex h-[25px] w-[190px] items-center justify-around"><EditPage /><NewPage /><Duplicate /><DimTrash /><Refresh /></div>
      </div>
    </div>
  );
}

/* ---------- menu bar ---------- */

const menus: [string, string, string, string][] = [
  ["", "F", "ile", "w-8"], ["", "E", "dit", "w-[34px]"], ["", "S", "elect", "w-[45px]"], ["", "V", "iew", "w-[38px]"],
  ["", "I", "mage", "w-[48px]"], ["", "L", "ayer", "w-[42px]"], ["", "C", "olors", "w-[48px]"], ["", "T", "ools", "w-[43px]"],
  ["Filte", "r", "s", "w-[45px]"], ["", "W", "indows", "w-[63px]"], ["", "H", "elp", "w-[40px]"],
];

function MenuBar() {
  return (
    <div className="flex h-[19px] items-center border-b border-[#b4b9c8] bg-[linear-gradient(#ffffff_0%,#e9edf7_48%,#d6dcee_50%,#dde3f4_100%)] pl-[7px] pt-[2px]">
      {menus.map(([a, b, c, w]) => (
        <span key={a + b + c} className={"shrink-0 whitespace-nowrap text-[12px] leading-[16px] tracking-[-0.15px] text-black " + w}>
          {a}<span className="underline underline-offset-2">{b}</span>{c}
        </span>
      ))}
    </div>
  );
}

function SharedDefs() {
  return (
    <svg width="0" height="0" className="absolute">
      <defs>
        <linearGradient id="toolgrad"><stop offset="0" stopColor="#666" /><stop offset="1" stopColor="#fff" /></linearGradient>
        <linearGradient id="letter" x1="0" y1="0" x2="0" y2="1"><stop offset="0" stopColor="#555" /><stop offset="1" stopColor="#1c1c1c" /></linearGradient>
        <linearGradient id="bw"><stop offset="0" stopColor="#000" /><stop offset="1" stopColor="#fff" /></linearGradient>
        <radialGradient id="soft0"><stop offset="0" stopColor="#000" /><stop offset=".3" stopColor="#000" stopOpacity=".6" /><stop offset=".65" stopColor="#000" stopOpacity=".18" /><stop offset="1" stopColor="#000" stopOpacity="0" /></radialGradient>
        <radialGradient id="soft1"><stop offset="0" stopColor="#000" /><stop offset=".3" stopColor="#000" stopOpacity=".88" /><stop offset=".65" stopColor="#000" stopOpacity=".32" /><stop offset="1" stopColor="#000" stopOpacity="0" /></radialGradient>
        <radialGradient id="soft2"><stop offset=".55" stopColor="#000" /><stop offset=".8" stopColor="#000" stopOpacity=".6" /><stop offset="1" stopColor="#000" stopOpacity="0" /></radialGradient>
        <pattern id="stip" width="2" height="2" patternUnits="userSpaceOnUse"><rect width="2" height="2" fill="#ccc" /><rect width="1" height="1" fill="#444" /><rect x="1" y="1" width="1" height="1" fill="#444" /></pattern>
      </defs>
    </svg>
  );
}

export default function App() {
  return (
    <div className="flex h-[768px] w-[1366px] flex-col overflow-hidden bg-[#efefef] font-['Open_Sans','Noto_Sans',sans-serif] text-black">
      <SharedDefs />
      <MenuBar />
      <div className="flex h-[749px]">
        <LeftDock />
        <CenterView />
        <div className="ml-[7px] flex w-[196px] shrink-0 flex-col">
          <LayersDock />
          <BrushesDock />
        </div>
      </div>
    </div>
  );
}
